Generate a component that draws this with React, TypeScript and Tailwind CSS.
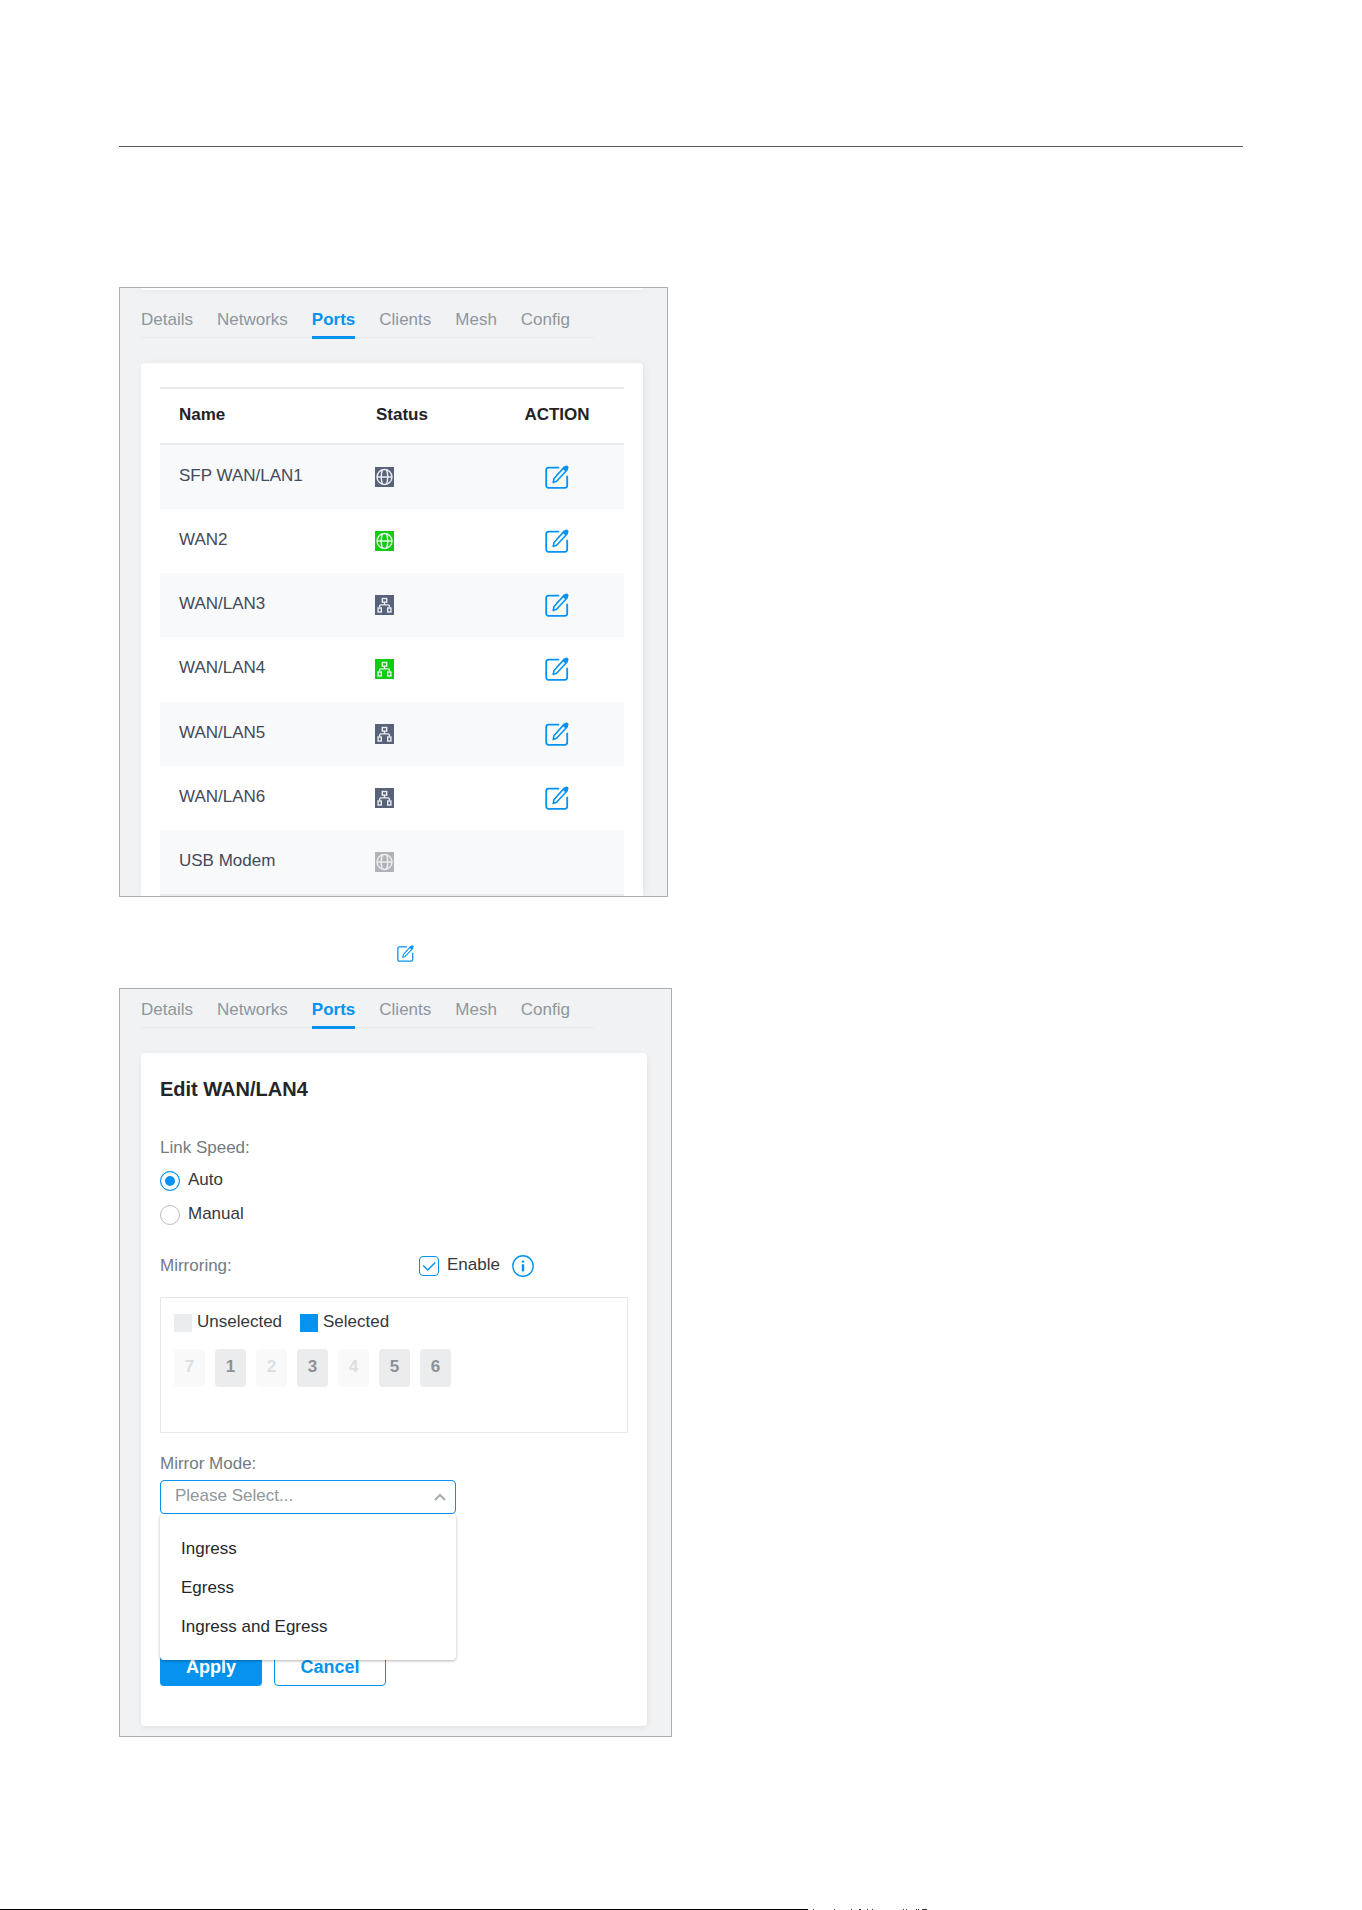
import { useState } from 'react'
import clsx from 'clsx'

type PortIcon = 'globe' | 'lan'

interface Port {
  name: string
  icon: PortIcon
  color: string
  label: string
  editable: boolean
}

const tabs = ['Details', 'Networks', 'Ports', 'Clients', 'Mesh', 'Config']

const ports: Port[] = [
  { name: 'SFP WAN/LAN1', icon: 'globe', color: 'bg-[#58627a]', label: 'Disconnected', editable: true },
  { name: 'WAN2', icon: 'globe', color: 'bg-[#0cce0c]', label: 'Connected', editable: true },
  { name: 'WAN/LAN3', icon: 'lan', color: 'bg-[#58627a]', label: 'Disconnected', editable: true },
  { name: 'WAN/LAN4', icon: 'lan', color: 'bg-[#0cce0c]', label: 'Connected', editable: true },
  { name: 'WAN/LAN5', icon: 'lan', color: 'bg-[#58627a]', label: 'Disconnected', editable: true },
  { name: 'WAN/LAN6', icon: 'lan', color: 'bg-[#58627a]', label: 'Disconnected', editable: true },
  { name: 'USB Modem', icon: 'globe', color: 'bg-[#b0b4b8]', label: 'Disabled', editable: false },
]

const mirrorPorts = [
  { id: 7, disabled: true },
  { id: 1, disabled: false },
  { id: 2, disabled: true },
  { id: 3, disabled: false },
  { id: 4, disabled: true },
  { id: 5, disabled: false },
  { id: 6, disabled: false },
]

const mirrorModes = ['Ingress', 'Egress', 'Ingress and Egress']

function EditIcon({ className }: { className: string }) {
  return (
    <svg viewBox="0 0 24 24" className={className} fill="none" stroke="currentColor" strokeWidth="1.8" aria-hidden="true">
      <path d="M14.2 2.6H3.4A2.2 2.2 0 0 0 1.2 4.8v15.8a2.2 2.2 0 0 0 2.2 2.2H20a2.2 2.2 0 0 0 2.2-2.2V10.8" />
      <path d="M8.2 17.4l.8-3.9L19.3 2.1l2.9 2.6L11.6 16.2z" strokeWidth="1.6" strokeLinejoin="round" />
      <path d="M17.6 3.8l2.2-2.6a2 2 0 0 1 3.1 2.8l-2.3 2.5z" fill="currentColor" stroke="none" />
    </svg>
  )
}

function StatusIcon({ icon, color, label }: { icon: PortIcon; color: string; label: string }) {
  return (
    <span role="img" aria-label={label} className={clsx('block h-5 w-[19px]', color)}>
      <svg viewBox="0 0 19 20" className="h-5 w-[19px]" fill="none" stroke="#eceef1" strokeWidth="1.4">
        {icon === 'globe' ? (
          <>
            <circle cx="9.5" cy="10" r="7.5" />
            <path d="M7.4 2.8c-1.5 4.6-1.5 9.8 0 14.4M11.6 2.8c1.5 4.6 1.5 9.8 0 14.4M2 10h15" />
          </>
        ) : (
          <>
            <rect x="7.3" y="3.5" width="4.4" height="3.6" />
            <path d="M9.5 7.2v2.6M4.6 12.6v-1.4q0-1.3 1.3-1.3h7.2q1.3 0 1.3 1.3v1.4" />
            <rect x="3.1" y="13" width="3.2" height="4" />
            <rect x="12.7" y="13" width="3.2" height="4" />
          </>
        )}
      </svg>
    </span>
  )
}

function TabBar() {
  return (
    <nav className="flex w-fit gap-6 border-b border-[#e7e9ec] pr-6">
      {tabs.map((tab) => (
        <a
          key={tab}
          href={`#${tab.toLowerCase()}`}
          className={clsx(
            '-mb-[2px] border-b-3 pt-px pb-1',
            tab === 'Ports' ? 'border-[#0593ef] font-bold text-[#0593ef]' : 'border-transparent text-[#8f969c]'
          )}
        >
          {tab}
        </a>
      ))}
    </nav>
  )
}

function PortsPanel() {
  return (
    <section className="w-[549px] max-w-full overflow-hidden border border-[#adaeb0] bg-[#f0f2f4] pr-6 pl-[21px]">
      <div className="mb-[17px] h-[2px] rounded-b-sm bg-white shadow-[0_1px_5px_rgba(0,0,0,0.08)]" />
      <TabBar />
      <div className="mt-[25px] rounded-t bg-white px-[19px] pt-6 shadow-[2px_0_6px_rgba(0,0,0,0.06)]">
        <table className="h-[509px] w-full table-fixed border-separate border-spacing-0 border-b-2 border-[#e8eaeb] text-left">
          <colgroup>
            <col className="w-[197px]" />
            <col />
            <col className="w-[134px]" />
          </colgroup>
          <thead>
            <tr className="text-[#222327]">
              <th className="h-[58px] border-y-2 border-[#e8eaeb] pb-[2px] pl-[19px]">Name</th>
              <th className="border-y-2 border-[#e8eaeb] pb-[2px] pl-[19px]">Status</th>
              <th className="border-y-2 border-[#e8eaeb] pb-[2px] text-center">ACTION</th>
            </tr>
          </thead>
          <tbody>
            {ports.map((port) => (
              <tr key={port.name} className="h-16 odd:bg-[#f7f9fb]">
                <td className="pb-[2px] pl-[19px] text-[#434a58]">{port.name}</td>
                <td className="pl-[18px]">
                  <StatusIcon icon={port.icon} color={port.color} label={port.label} />
                </td>
                <td>
                  {port.editable && (
                    <button type="button" aria-label={`Edit ${port.name}`} className="mx-auto block text-[#0593ef]">
                      <EditIcon className="size-6" />
                    </button>
                  )}
                </td>
              </tr>
            ))}
          </tbody>
        </table>
      </div>
    </section>
  )
}

function EditPortPanel() {
  const [speed, setSpeed] = useState('auto')
  const [mirroring, setMirroring] = useState(true)
  const [mode, setMode] = useState('')
  const [menuOpen, setMenuOpen] = useState(true)

  return (
    <section className="w-[553px] max-w-full border border-[#adaeb0] bg-[#f0f2f4] pt-2 pr-6 pb-[10px] pl-[21px]">
      <TabBar />
      <form className="mt-[25px] rounded bg-white px-[19px] pt-6 pb-10 text-[#36383c] shadow-[1px_2px_6px_rgba(0,0,0,0.07)]">
        <h2 className="text-xl leading-6 font-bold text-[#242529]">Edit WAN/LAN4</h2>

        <fieldset className="mt-[35px]">
          <legend className="text-[#737b82]">Link Speed:</legend>
          <div className="mt-2 flex flex-col gap-2">
            {['Auto', 'Manual'].map((option) => (
              <label key={option} className="flex w-fit items-center gap-2">
                <input
                  type="radio"
                  name="link-speed"
                  checked={speed === option.toLowerCase()}
                  onChange={() => setSpeed(option.toLowerCase())}
                  className="size-5 appearance-none rounded-full border border-[#b9bec3] bg-white checked:border-[#0593ef] checked:bg-[#0593ef] checked:shadow-[inset_0_0_0_4px_#fff]"
                />
                <span className="pb-[2px]">{option}</span>
              </label>
            ))}
          </div>
        </fieldset>

        <div className="mt-[25px] flex items-center">
          <span className="w-[259px] text-[#737b82]">Mirroring:</span>
          <label className="flex items-center gap-2">
            <span className="grid size-5 place-items-center">
              <input
                type="checkbox"
                checked={mirroring}
                onChange={(e) => setMirroring(e.target.checked)}
                className="col-start-1 row-start-1 size-5 appearance-none rounded-sm border border-[#0593ef] bg-white"
              />
              {mirroring && (
                <svg viewBox="0 0 20 20" className="pointer-events-none col-start-1 row-start-1 size-5" fill="none" stroke="#0593ef" strokeWidth="1.4">
                  <path d="M4.2 9.6l4.6 4.4 7.4-7.6" />
                </svg>
              )}
            </span>
            <span className="pb-[2px]">Enable</span>
          </label>
          <button type="button" aria-label="About mirroring" className="ml-3 text-[#0593ef]">
            <svg viewBox="0 0 22 22" className="size-[22px]" fill="none" stroke="currentColor" strokeWidth="1.4">
              <circle cx="11" cy="11" r="10.2" />
              <path d="M11 9.2v7.2" strokeWidth="2.4" />
              <path d="M11 5.6v2" strokeWidth="2.4" />
            </svg>
          </button>
        </div>

        <div className="mt-[18px] border border-[#e6e8ea] px-[13px] pt-3 pb-[45px]">
          <div className="flex">
            <span className="flex w-[126px] items-center gap-[5px]">
              <span className="size-[18px] bg-[#ebecee]" />
              <span className="pb-[2px]">Unselected</span>
            </span>
            <span className="flex items-center gap-[5px]">
              <span className="size-[18px] bg-[#0593ef]" />
              <span className="pb-[2px]">Selected</span>
            </span>
          </div>
          <div className="mt-[13px] flex gap-[10px]">
            {mirrorPorts.map((port) => (
              <button
                key={port.id}
                type="button"
                disabled={port.disabled}
                className="h-[38px] w-[31px] rounded-sm bg-[#ebecee] pb-[2px] font-bold text-[#8b9197] disabled:bg-[#f9f9fa] disabled:text-[#dcdfe2]"
              >
                {port.id}
              </button>
            ))}
          </div>
        </div>

        <label htmlFor="mirror-mode" className="mt-[19px] block w-fit text-[#737b82]">
          Mirror Mode:
        </label>
        <div className="relative mt-1 w-[296px] max-w-full">
          <div className="grid items-center">
            <select
              id="mirror-mode"
              value={mode}
              onChange={(e) => setMode(e.target.value)}
              onClick={() => setMenuOpen(!menuOpen)}
              className="col-start-1 row-start-1 h-[34px] w-full appearance-none rounded-sm border border-[#0593ef] bg-white pr-8 pb-[3px] pl-[14px] text-[#8f969c]"
            >
              <option value="">Please Select...</option>
              {mirrorModes.map((item) => (
                <option key={item}>{item}</option>
              ))}
            </select>
            <svg viewBox="0 0 12 8" className="pointer-events-none col-start-1 row-start-1 mr-[10px] h-2 w-3 justify-self-end" fill="none" stroke="#a6abb0" strokeWidth="2">
              <path d="M1 7l5-5 5 5" />
            </svg>
          </div>
          {menuOpen && (
            <ul className="absolute top-full left-0 z-10 w-full rounded bg-white pt-[15px] pb-[14px] shadow-[0_1px_3px_rgba(0,0,0,0.3)]">
              {mirrorModes.map((item) => (
                <li key={item}>
                  <button
                    type="button"
                    onClick={() => {
                      setMode(item)
                      setMenuOpen(false)
                    }}
                    className="block h-[39px] w-full pl-[21px] text-left text-[#26282c]"
                  >
                    {item}
                  </button>
                </li>
              ))}
            </ul>
          )}
        </div>

        <div className="mt-[134px] flex gap-3 text-lg font-bold">
          <button type="button" className="h-[38px] w-[102px] rounded-sm bg-[#0593ef] text-white">
            Apply
          </button>
          <button type="button" className="h-[38px] w-[112px] rounded-sm border border-[#0593ef] bg-white text-[#0593ef]">
            Cancel
          </button>
        </div>
      </form>
    </section>
  )
}

export default function App() {
  return (
    <div className="flex min-h-screen flex-col bg-white font-['Liberation_Sans',Arial,sans-serif] text-[17px] leading-6">
      <main className="px-[119px] pt-[146px]">
        <hr className="mb-[140px] border-t border-[#58585a]" />
        <PortsPanel />
        <div className="mt-12 mb-[26px] pl-[278px] text-[#0593ef]">
          <EditIcon className="size-[17px]" />
        </div>
        <EditPortPanel />
      </main>
      <footer className="mt-auto flex h-px">
        <div className="w-[808px] bg-black" />
        <svg viewBox="0 0 122 1" className="h-px w-[122px]" shapeRendering="crispEdges" aria-hidden="true">
          <path d="M5 0h1v1H5zM26 0h1v1h-1zM43 0h1v1h-1zM51 0h2v1h-2zM59 0h1v1h-1zM64 0h1v1h-1zM95 0h1v1h-1zM98 0h1v1h-1zM108 0h1v1h-1zM110 0h1v1h-1zM114 0h5v1h-5z" fill="#333" />
        </svg>
      </footer>
    </div>
  )
}
